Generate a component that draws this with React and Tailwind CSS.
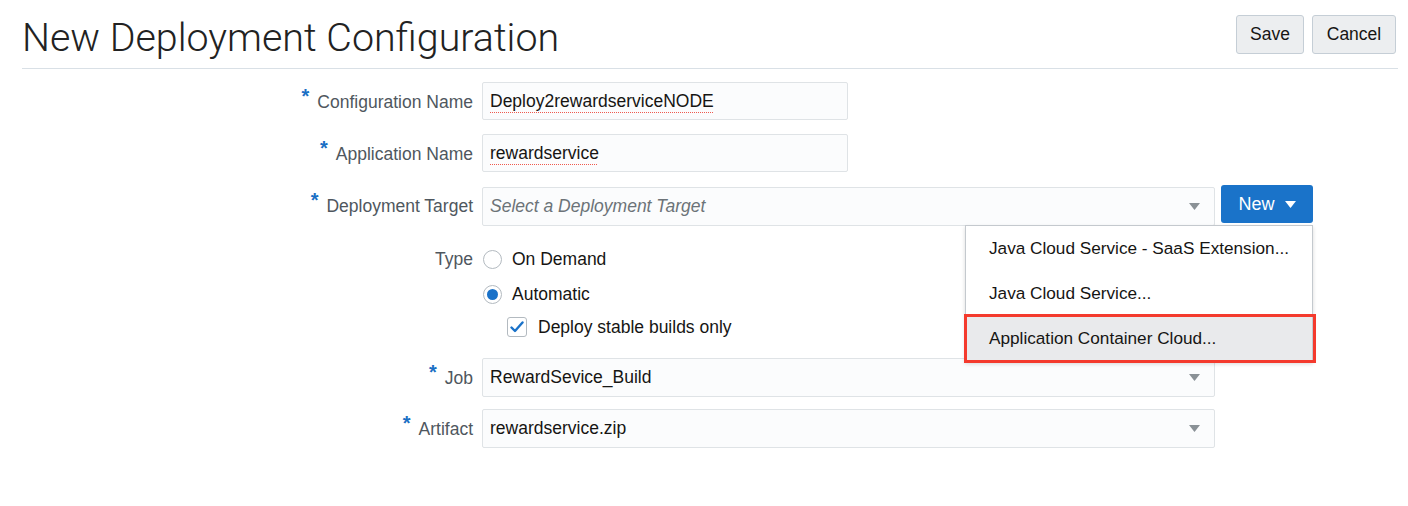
import React from 'react'

const sans = { fontFamily: '"Liberation Sans", Arial, sans-serif' }

function Req() {
  return <span className="relative top-[-5px] mr-[8px] text-[20px] font-bold leading-none text-[#1a6fc4]">*</span>
}

function Label({ children, required }) {
  return (
    <div className="w-[473px] shrink-0 text-right text-[17.5px] leading-[20px] text-[#4f575e]">
      {required && <Req />}
      {children}
    </div>
  )
}

function Caret({ color = '#8a9196' }) {
  return (
    <svg width="11" height="7" viewBox="0 0 11 7">
      <path d="M0 0H11L5.5 7Z" fill={color} />
    </svg>
  )
}

function TextField({ value }) {
  return (
    <div className="ml-[9px] flex h-[38px] w-[366px] items-center rounded-[2px] border border-[#dfe3e6] bg-[#fbfcfd] px-[7px] text-[17.5px] text-[#161513]">
      <span className="underline decoration-[color:#ef5a4f] decoration-dotted decoration-1 underline-offset-[5px]">{value}</span>
    </div>
  )
}

function Select({ value, placeholder, className = '' }) {
  return (
    <div className={`ml-[9px] flex h-[39px] w-[733px] items-center justify-between rounded-[2px] border border-[#dfe3e6] bg-[#fbfcfd] pl-[7px] pr-[14px] text-[17.5px] ${className}`}>
      {placeholder
        ? <span className="italic text-[#6c7378]">{placeholder}</span>
        : <span className="text-[#161513]">{value}</span>}
      <Caret />
    </div>
  )
}

function Radio({ checked }) {
  return (
    <span className="flex h-[19px] w-[19px] items-center justify-center rounded-full border border-[#b3bac0] bg-white">
      {checked && <span className="h-[11px] w-[11px] rounded-full bg-[#1a72c9]" />}
    </span>
  )
}

const menuItems = ['Java Cloud Service - SaaS Extension...', 'Java Cloud Service...', 'Application Container Cloud...']

export default function App() {
  return (
    <div className="h-[506px] w-[1408px] overflow-hidden bg-white" style={sans}>
      <header className="ml-[22px] mr-[10px] flex h-[69px] items-start justify-between border-b border-[#d9e0e6] pr-[2px] pt-[15px]">
        <h1 className="mt-[1px] text-[39.4px] font-light leading-[44px] text-[#222222]" style={{ fontFamily: 'Roboto, "Liberation Sans", sans-serif' }}>
          New Deployment Configuration
        </h1>
        <div className="flex gap-[8px]">
          <button className="h-[39px] w-[68px] rounded-[3px] border border-[#c5ced6] bg-[#eceef0] text-[17.5px] text-[#161513]">Save</button>
          <button className="h-[39px] w-[84px] rounded-[3px] border border-[#c5ced6] bg-[#eceef0] text-[17.5px] text-[#161513]">Cancel</button>
        </div>
      </header>

      <div className="flex flex-col">
        <div className="mt-[13px] flex h-[38px] items-center">
          <Label required>Configuration Name</Label>
          <TextField value="Deploy2rewardserviceNODE" />
        </div>

        <div className="mt-[14px] flex h-[38px] items-center">
          <Label required>Application Name</Label>
          <TextField value="rewardservice" />
        </div>

        <div className="mt-[13px] flex h-[41px] items-start">
          <div className="mt-[10px]"><Label required>Deployment Target</Label></div>
          <Select placeholder="Select a Deployment Target" className="mt-[2px]" />
          <div className="relative ml-[6px]">
            <button className="flex h-[38px] w-[92px] items-center justify-center gap-[10px] rounded-[3px] bg-[#1a73c9] text-[18px] text-white">
              New <Caret color="#ffffff" />
            </button>
            <div className="absolute right-0 top-[40px] z-10 w-[348px] border border-[#c4c9ce] bg-white shadow-[0_2px_4px_rgba(0,0,0,0.15)]">
              {menuItems.map((item, i) => (
                <div key={item} className={`relative flex h-[45px] items-center pl-[23px] text-[17.2px] text-[#161513] ${i === 2 ? 'bg-[#e9eaec]' : ''}`}>
                  {item}
                  {i === 2 && <div className="absolute bottom-[-2px] left-[-2px] right-[-4px] top-[-2px] border-[3px] border-[#f43a2d]" />}
                </div>
              ))}
            </div>
          </div>
        </div>

        <div className="mt-[23px] flex h-[20px] items-center">
          <Label>Type</Label>
          <div className="ml-[10px] flex items-center gap-[10px] text-[17.5px] text-[#161513]">
            <Radio /> On Demand
          </div>
        </div>

        <div className="mt-[15px] flex h-[20px] items-center">
          <div className="w-[473px] shrink-0" />
          <div className="ml-[10px] flex items-center gap-[10px] text-[17.5px] text-[#161513]">
            <Radio checked /> Automatic
          </div>
        </div>

        <div className="mt-[13px] flex h-[20px] items-center">
          <div className="w-[473px] shrink-0" />
          <div className="ml-[34px] flex items-center gap-[11px] text-[17.5px] text-[#161513]">
            <span className="flex h-[20px] w-[20px] items-center justify-center rounded-[3px] border border-[#b3bac0] bg-white">
              <svg width="14" height="12" viewBox="0 0 14 12">
                <path d="M1.5 6.5L5 10L12.5 1.5" fill="none" stroke="#1a72c9" strokeWidth="2.4" strokeLinecap="round" strokeLinejoin="round" />
              </svg>
            </span>
            Deploy stable builds only
          </div>
        </div>

        <div className="mt-[21px] flex h-[39px] items-center">
          <Label required>Job</Label>
          <Select value="RewardSevice_Build" />
        </div>

        <div className="mt-[12px] flex h-[39px] items-center">
          <Label required>Artifact</Label>
          <Select value="rewardservice.zip" />
        </div>
      </div>
    </div>
  )
}
